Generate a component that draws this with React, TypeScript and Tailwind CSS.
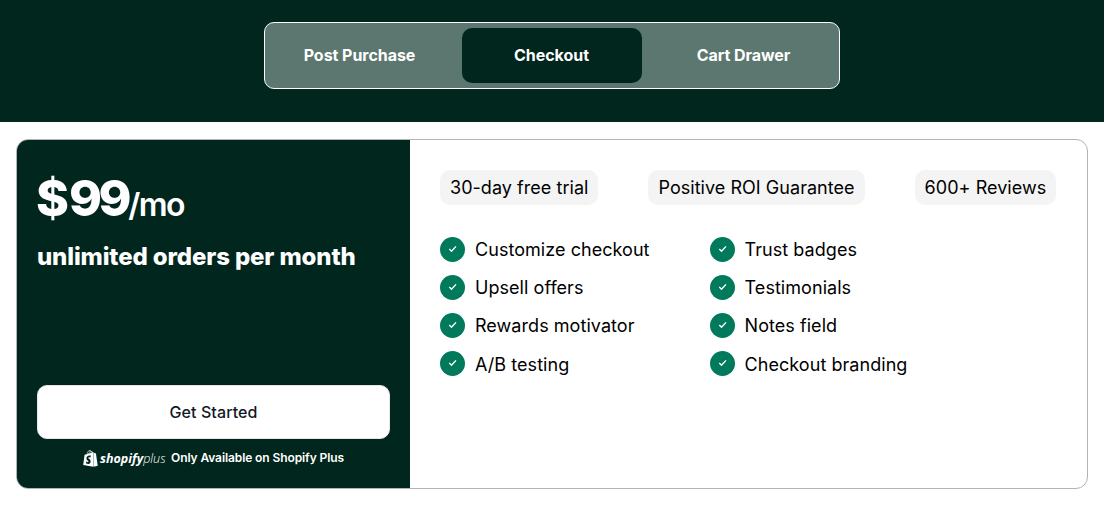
import clsx from "clsx";
import { FaShopify } from "react-icons/fa";

const tabs = ["Post Purchase", "Checkout", "Cart Drawer"];
const activeTab = "Checkout";

const highlights = ["30-day free trial", "Positive ROI Guarantee", "600+ Reviews"];

const featureColumns = [
  ["Customize checkout", "Upsell offers", "Rewards motivator", "A/B testing"],
  ["Trust badges", "Testimonials", "Notes field", "Checkout branding"],
];

function CheckBadge() {
  return (
    <span className="flex size-[25px] shrink-0 items-center justify-center rounded-full bg-[#007a5a]">
      <svg width="25" height="25" viewBox="0 0 25 25" fill="none">
        <path d="M9.3 12.1L11.5 14.3L16 9.4" stroke="#fff" strokeWidth="1.4" />
      </svg>
    </span>
  );
}

function ShopifyPlusLogo() {
  return (
    <span className="flex h-5 w-[83px] items-center text-white">
      <FaShopify className="h-[17px] w-[15px] shrink-0" />
      <span className="mt-[2px] ml-[2px] flex items-baseline whitespace-nowrap font-['Open_Sans',sans-serif] text-[12.5px] leading-5 italic">
        <span className="font-bold">shopify</span>
        <span className="font-light">plus</span>
      </span>
    </span>
  );
}

export default function App() {
  return (
    <div className="h-[506px] w-[1104px] overflow-hidden bg-white font-['Inter',sans-serif] text-black">
      <header className="flex h-[122px] justify-center bg-[#00261d] pt-[22px]">
        <div className="flex h-[67px] w-[576px] gap-3 rounded-[10px] border border-white bg-[#5b776f] p-[5px]">
          {tabs.map((tab) => (
            <button
              key={tab}
              type="button"
              className={clsx(
                "flex-1 rounded-[10px] pr-px pb-[2px] text-base font-bold tracking-[-0.05px] text-white",
                tab === activeTab && "bg-[#00261d]",
              )}
            >
              {tab}
            </button>
          ))}
        </div>
      </header>

      <section className="mx-4 mt-[17px] flex h-[350px] overflow-hidden rounded-xl border border-[#b3b3b3]">
        <div className="flex w-[393px] flex-col bg-[#00261d] px-5 text-white">
          <p className="mt-[29px] flex items-baseline leading-[58px]">
            <span className="-ml-px text-[50px] font-extrabold">$</span>
            <span className="text-[50px] font-extrabold tracking-[-3.5px]">99</span>
            <span className="text-[32px] font-semibold tracking-[-1.6px]">/mo</span>
          </p>
          <h2 className="mt-[8px] text-2xl leading-[29px] font-extrabold tracking-[-0.13px]">unlimited orders per month</h2>
          <button
            type="button"
            className="mt-auto h-[54px] rounded-[10px] border border-gray-200 bg-white text-base font-medium tracking-[0.1px] text-[#111827]"
          >
            Get Started
          </button>
          <div className="mt-[9px] mb-5 flex h-5 items-center justify-center gap-[5px]">
            <ShopifyPlusLogo />
            <span className="text-xs font-semibold tracking-[-0.1px]">Only Available on Shopify Plus</span>
          </div>
        </div>

        <div className="flex-1 p-[30px]">
          <div className="flex gap-[50px]">
            {highlights.map((item) => (
              <span key={item} className="flex h-[35px] items-center rounded-[10px] bg-[#f4f4f4] px-[10px] text-lg tracking-[0.04px] whitespace-nowrap">
                {item}
              </span>
            ))}
          </div>
          <div className="mt-8 flex gap-[60px]">
            {featureColumns.map((features) => (
              <ul key={features[0]} className="flex flex-col gap-[13px]">
                {features.map((feature) => (
                  <li key={feature} className="flex h-[25px] items-center gap-[10px] text-lg tracking-[0.05px] whitespace-nowrap">
                    <CheckBadge />
                    <span className={clsx(feature === features[features.length - 1] && "pt-[2px]")}>{feature}</span>
                  </li>
                ))}
              </ul>
            ))}
          </div>
        </div>
      </section>
    </div>
  );
}
